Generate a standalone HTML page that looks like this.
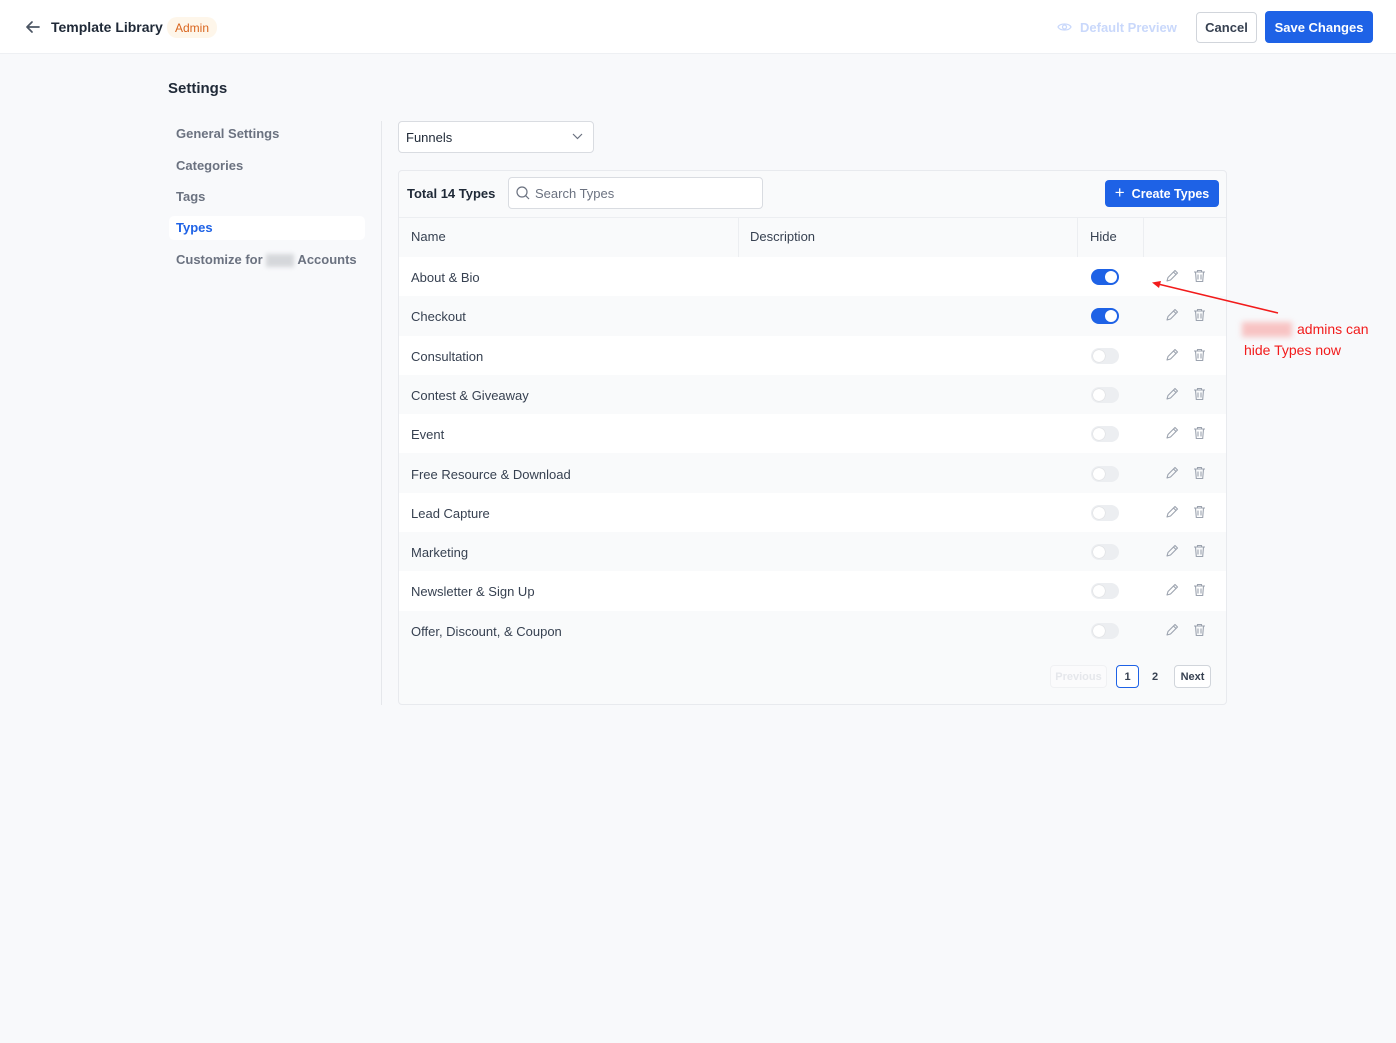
<!DOCTYPE html>
<html><head><meta charset="utf-8"><style>
*{box-sizing:border-box;margin:0;padding:0}
body{width:1396px;height:1043px;background:#f8f9fb;font-family:"Liberation Sans",sans-serif;color:#1f2937;position:relative;overflow:hidden;font-size:13px}
.abs{position:absolute}
.top{left:0;top:0;width:1396px;height:54px;background:#fff;border-bottom:1px solid #eef0f3}
.btn{position:absolute;border-radius:4px;font-size:13px;font-weight:bold;display:flex;align-items:center;justify-content:center}
.nav{position:absolute;left:176px;font-size:13px;font-weight:bold;color:#6b7280}
.card{left:398px;top:170px;width:829px;height:535px;background:#f9fafb;border:1px solid #e8eaee;border-radius:4px}
.row{position:absolute;left:399px;width:827px;height:39.3px}
.row .n{position:absolute;left:12px;top:13px;font-size:13px;color:#374151}
.tg{position:absolute;left:692px;top:12px;width:28px;height:16px;border-radius:8px;background:#eceef1}
.tg::after{content:"";position:absolute;left:2px;top:2px;width:12px;height:12px;border-radius:50%;background:#fff;box-shadow:0 0 1px #bbb}
.tg.on{background:#1e62e6}
.tg.on::after{left:14px;box-shadow:none}
.ic{position:absolute;top:12px}
</style></head><body>
<div class="abs top"></div>
<svg class="abs" style="left:25px;top:19px" width="16" height="16" viewBox="0 0 16 16"><path d="M14 8H2M7 3L2 8l5 5" stroke="#4b5563" stroke-width="1.7" fill="none" stroke-linecap="round" stroke-linejoin="round"/></svg>
<div class="abs" style="left:51px;top:19px;font-size:14px;font-weight:bold;color:#1f2937">Template Library</div>
<div class="abs" style="left:167px;top:17px;width:50px;height:21px;border-radius:10px;background:#fef6ea;color:#d9641c;font-size:12px;display:flex;align-items:center;justify-content:center">Admin</div>
<svg class="abs" style="left:1057px;top:21px" width="15" height="12" viewBox="0 0 15 12"><path d="M1 6C3 2 12 2 14 6C12 10 3 10 1 6Z" stroke="#c9d8fb" stroke-width="1.3" fill="none"/><circle cx="7.5" cy="6" r="2" stroke="#c9d8fb" stroke-width="1.3" fill="none"/></svg>
<div class="abs" style="left:1080px;top:20px;font-size:13px;font-weight:bold;color:#c9d8fb">Default Preview</div>
<div class="btn" style="left:1196px;top:12px;width:61px;height:31px;background:#fff;border:1px solid #d1d5db;color:#374151">Cancel</div>
<div class="btn" style="left:1265px;top:11px;width:108px;height:32px;background:#1e62e6;color:#fff">Save Changes</div>

<div class="abs" style="left:168px;top:80px;font-size:15px;font-weight:bold;color:#1f2937">Settings</div>
<div class="nav" style="top:126px">General Settings</div>
<div class="nav" style="top:158px">Categories</div>
<div class="nav" style="top:189px">Tags</div>
<div class="abs" style="left:169px;top:216px;width:196px;height:24px;background:#fff;border-radius:5px"></div>
<div class="nav" style="top:220px;color:#1e62e6">Types</div>
<div class="nav" style="top:252px">Customize for <span style="display:inline-block;width:28px;height:13px;background:#d5d7db;filter:blur(2px);vertical-align:middle"></span> Accounts</div>
<div class="abs" style="left:381px;top:121px;width:1px;height:584px;background:#e5e7eb"></div>

<div class="abs" style="left:398px;top:121px;width:196px;height:32px;background:#fff;border:1px solid #d9dce1;border-radius:4px"></div>
<div class="abs" style="left:406px;top:130px;font-size:13px;color:#1f2937">Funnels</div>
<svg class="abs" style="left:572px;top:133px" width="11" height="7" viewBox="0 0 11 7"><path d="M1 1l4.5 4.5L10 1" stroke="#6b7280" stroke-width="1.2" fill="none"/></svg>

<div class="abs card"></div>
<div class="abs" style="left:407px;top:186px;font-size:13px;font-weight:bold;color:#1f2937">Total 14 Types</div>
<div class="abs" style="left:508px;top:177px;width:255px;height:32px;background:#fff;border:1px solid #d9dce1;border-radius:4px"></div>
<svg class="abs" style="left:516px;top:186px" width="14" height="14" viewBox="0 0 14 14"><circle cx="6" cy="6" r="5" stroke="#6b7280" stroke-width="1.2" fill="none"/><path d="M9.7 9.7L13 13" stroke="#6b7280" stroke-width="1.2"/></svg>
<div class="abs" style="left:535px;top:186px;font-size:13px;color:#6b7280">Search Types</div>
<div class="btn" style="left:1105px;top:180px;width:114px;height:27px;background:#1e62e6;color:#fff;font-size:12.5px"><span style="font-size:17px;font-weight:normal;margin-right:7px;margin-top:-2px">+</span>Create Types</div>
<div class="abs" style="left:399px;top:217px;width:827px;height:1px;background:#eceef1"></div>
<div class="abs" style="left:738px;top:218px;width:1px;height:39px;background:#eceef1"></div>
<div class="abs" style="left:1077px;top:218px;width:1px;height:39px;background:#eceef1"></div>
<div class="abs" style="left:1143px;top:218px;width:1px;height:39px;background:#eceef1"></div>
<div class="abs" style="left:411px;top:229px;color:#374151">Name</div>
<div class="abs" style="left:750px;top:229px;color:#374151">Description</div>
<div class="abs" style="left:1090px;top:229px;color:#374151">Hide</div>

<div id="rows"></div>
<script>
var names=["About & Bio","Checkout","Consultation","Contest & Giveaway","Event","Free Resource & Download","Lead Capture","Marketing","Newsletter & Sign Up","Offer, Discount, & Coupon"];
var h="";
names.forEach(function(n,i){
var top=257+i*39.3;
h+='<div class="row" style="top:'+top+'px;background:'+(i%2?'#f9fafb':'#fff')+'"><div class="n">'+n.replace(/&/g,'&amp;')+'</div><div class="tg'+(i<2?' on':'')+'"></div>'+
'<svg class="ic" style="left:766px" width="14" height="14" viewBox="0 0 14 14"><path d="M2 12l1-3.5L10 1.5l2.5 2.5L5.5 11Z M8.5 3l2.5 2.5" stroke="#9ca3af" stroke-width="1.1" fill="none" stroke-linejoin="round"/></svg>'+
'<svg class="ic" style="left:794px" width="13" height="14" viewBox="0 0 13 14"><path d="M1 3h11M4.5 3V1.5h4V3M2.5 3l.8 9.5h6.4L10.5 3M5 5.5v5M8 5.5v5" stroke="#9ca3af" stroke-width="1.1" fill="none"/></svg></div>';
});
document.getElementById("rows").innerHTML=h;
</script>

<div class="btn" style="left:1050px;top:665px;width:57px;height:23px;background:#fbfbfc;border:1px solid #f0f1f3;color:#e5e7eb;font-size:11px">Previous</div>
<div class="btn" style="left:1116px;top:665px;width:23px;height:23px;background:#fff;border:1px solid #1e62e6;color:#374151;font-size:11px">1</div>
<div class="btn" style="left:1145px;top:665px;width:20px;height:23px;color:#374151;font-size:11px">2</div>
<div class="btn" style="left:1174px;top:665px;width:37px;height:23px;background:#fff;border:1px solid #d1d5db;color:#374151;font-size:11px">Next</div>

<svg class="abs" style="left:1150px;top:278px" width="132" height="40" viewBox="0 0 132 40"><path d="M128 35L8 6" stroke="#f21b1b" stroke-width="1.5"/><path d="M2 4.5L11 3L9 10Z" fill="#f21b1b"/></svg>
<div class="abs" style="left:1242px;top:322px;width:50px;height:15px;background:#f7c3c3;filter:blur(3px)"></div>
<div class="abs" style="left:1297px;top:321px;font-size:14px;color:#f21b1b">admins can</div>
<div class="abs" style="left:1244px;top:342px;font-size:14px;color:#f21b1b">hide Types now</div>
</body></html>
